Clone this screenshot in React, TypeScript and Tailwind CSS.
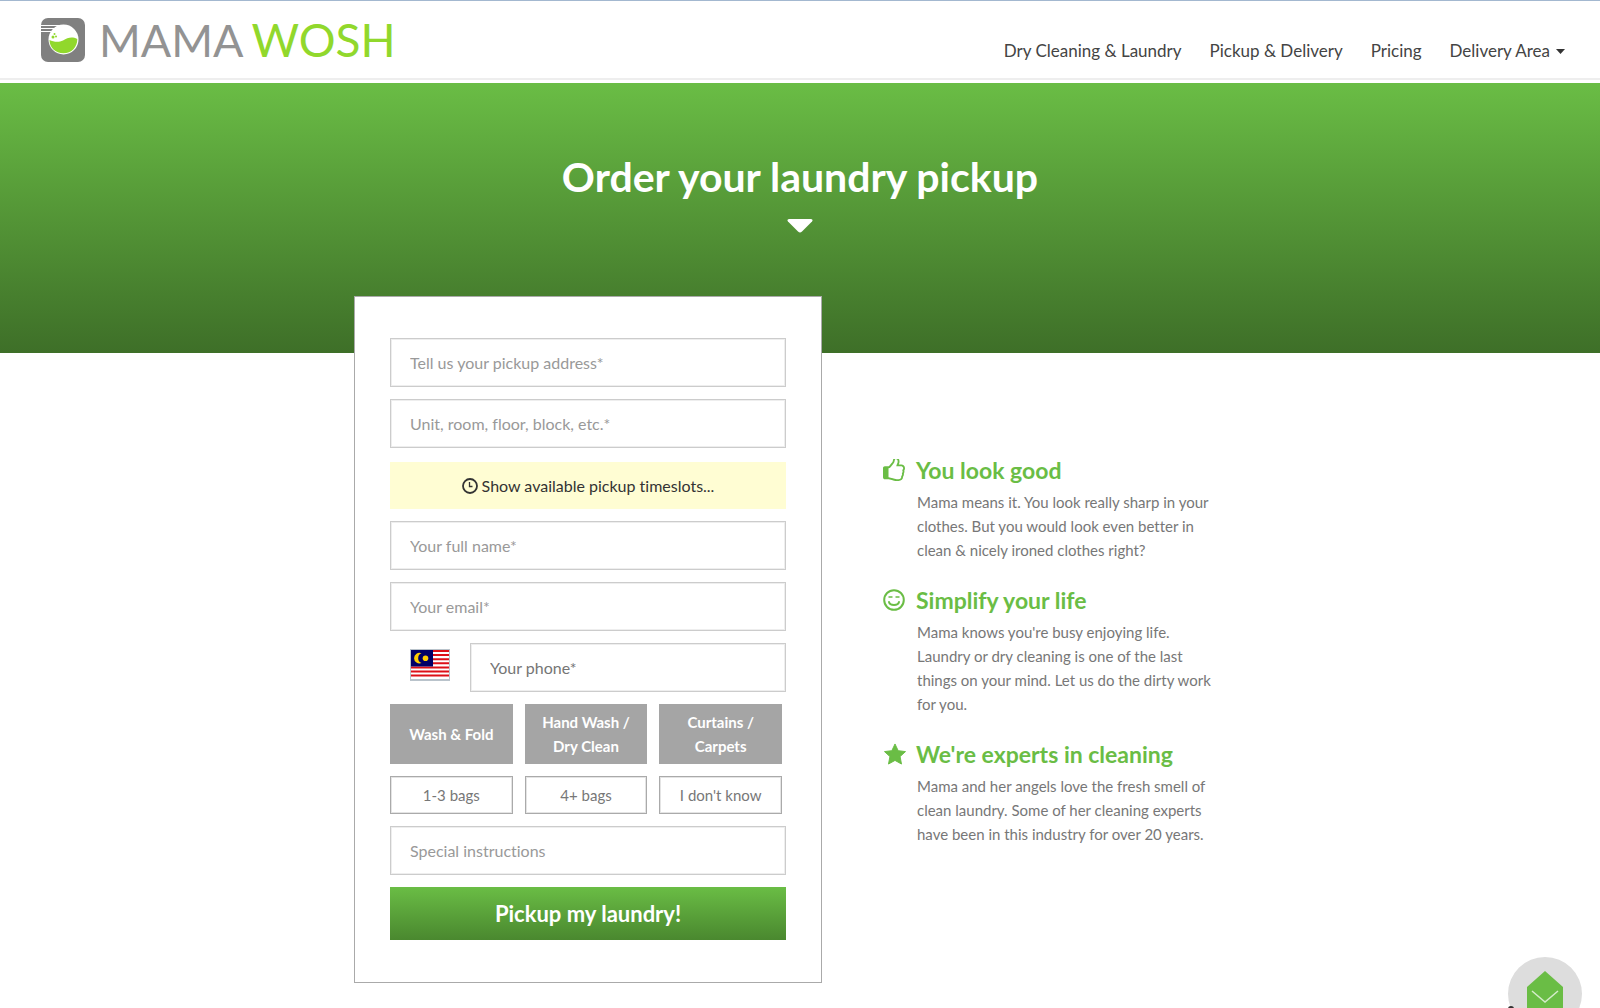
import type { ReactNode } from "react";

const fieldClass =
  "h-[49px] w-full min-w-0 border border-[#ccc] bg-white px-[19px] text-base shadow-[inset_0_0_0_1px_#eee] outline-none focus:border-[#6abd45]";

function Logo() {
  return (
    <a href="#home" aria-label="Mama Wosh" className="flex items-center gap-[14px]">
      <svg viewBox="0 0 44 44" className="size-11 shrink-0" aria-hidden="true">
        <rect x="0" y="0" width="44" height="44" rx="7" fill="#808080" />
        <path d="M0 7.500H20M0 10.500H14M0 13.500H10" stroke="#fff" strokeWidth="1.200" />
        <circle cx="22.500" cy="21.500" r="15" fill="#fff" />
        <path
          d="M8.500 22C12 23.500 17 25 22 22.500C27 19.500 31 18.500 36.300 21C36.500 29 30.500 35.300 22.500 35.300C14.500 35.300 8.500 29.500 8.500 22Z"
          fill="#91d82c"
        />
        <circle cx="12" cy="19" r="1.500" fill="#91d82c" />
        <circle cx="15" cy="18.500" r="1" fill="#91d82c" />
        <circle cx="13.500" cy="16" r="1" fill="#91d82c" />
      </svg>
      <span className="flex items-baseline gap-2 leading-[46px]">
        <span className="text-[45px] text-[#939393]">MAMA</span>
        <span className="text-[46px] text-[#91d82c]">WOSH</span>
      </span>
    </a>
  );
}

function Clock() {
  return (
    <svg viewBox="0 0 16 16" className="size-4 shrink-0" fill="none" stroke="currentColor" aria-hidden="true">
      <circle cx="8" cy="8" r="7" strokeWidth="1.800" />
      <path d="M7.500 4V8.500H10.500" strokeWidth="1.300" />
    </svg>
  );
}

function Flag() {
  return (
    <svg viewBox="0 0 40 32" className="h-8 w-10" aria-hidden="true">
      <rect width="40" height="32" fill="#b9c3cb" />
      <rect x="1" y="1" width="38" height="29" fill="#fff" />
      <path
        d="M1 2H39M1 6.100H39M1 10.200H39M1 14.300H39M1 18.400H39M1 22.500H39M1 26.600H39"
        stroke="#dd1018"
        strokeWidth="2"
      />
      <rect x="1" y="1" width="22" height="16.500" fill="#010066" />
      <path d="M11.500 4.300A5.300 5.300 0 1 0 11.500 14A5.200 5.200 0 0 1 11.500 4.300Z" fill="#fc0" />
      <circle cx="15.500" cy="9.200" r="2.800" fill="#fc0" />
    </svg>
  );
}

function ThumbsUp() {
  return (
    <svg viewBox="128 128 1536 1536" className="size-[22px]" fill="currentColor" aria-hidden="true">
      <path d="M192 768h256v640H192zM384 1344q0-26-19-45t-45-19-45 19-19 45 19 45 45 19 45-19 19-45z" fillRule="evenodd" />
      <path d="M1536 768q0-51-39-89.500t-89-38.500h-352q0-58 48-159.500t48-160.500q0-98-32-145t-128-47q-26 26-38 85t-30.500 125.500-59.500 109.500q-22 23-77 91-4 5-23 30t-31.500 41-34.500 42.500-40 44-38.500 35.500-40 27-35.500 9h-32v640h32q13 0 31.500 3t33 6.500 38 11 35 11.500 35.500 12.500 29 10.500q211 73 342 73h121q192 0 192-167 0-26-5-56 30-16 47.500-52.500t17.500-73.500-18-69q53-50 53-119 0-25-10-55.500t-25-47.500q32-1 53.500-47t21.500-81zm128-1q0 89-49 163 9 33 9 69 0 77-38 144 3 21 3 43 0 101-60 178 1 139-85 219.500t-227 80.500h-129q-96 0-189.500-22.500t-216.500-65.500q-116-40-138-40h-288q-53 0-90.500-37.500t-37.500-90.500v-640q0-53 37.500-90.500t90.500-37.500h274q36-24 137-155 58-75 107-128 24-25 35.500-85.500t30.500-126.500 62-108q39-37 90-37 84 0 151 32.500t102 101.500 35 186q0 93-48 192h176q104 0 180 76t76 179z" />
    </svg>
  );
}

function Smile() {
  return (
    <svg
      viewBox="0 0 22 22"
      className="size-[22px]"
      fill="none"
      stroke="currentColor"
      strokeWidth="2"
      aria-hidden="true"
    >
      <circle cx="11" cy="11" r="9.800" />
      <path d="M5.500 8H9.500M12.500 8H16.500" strokeWidth="1.600" />
      <path d="M6 13C7 17 15 17 16 13" strokeLinecap="round" />
    </svg>
  );
}

function Star() {
  return (
    <svg viewBox="0 0 24 23" className="h-[22px] w-6" fill="currentColor" aria-hidden="true">
      <path
        d="M12 1L15.300 8L23 9L17.300 14.200L18.800 22L12 18.200L5.200 22L6.700 14.200L1 9L8.700 8Z"
        stroke="currentColor"
        strokeLinejoin="round"
      />
    </svg>
  );
}

function Feature({ icon, title, children }: { icon: ReactNode; title: string; children: ReactNode }) {
  return (
    <section>
      <h2 className="flex items-center gap-[9px] text-[23px] leading-8 font-bold text-[#6abd45]">
        <span className="flex w-6 shrink-0">{icon}</span>
        {title}
      </h2>
      <p className="mt-1 pl-[34px] text-[15px] leading-6 text-[#777]">{children}</p>
    </section>
  );
}

function Field({ label, type = "text", dark = false }: { label: string; type?: string; dark?: boolean }) {
  return (
    <input
      type={type}
      aria-label={label}
      placeholder={label}
      className={`${fieldClass} ${dark ? "placeholder:text-[#757575]" : "placeholder:text-[#999]"}`}
    />
  );
}

const navItems = ["Dry Cleaning & Laundry", "Pickup & Delivery", "Pricing"];
const services = ["Wash & Fold", "Hand Wash\u00a0/ Dry Clean", "Curtains\u00a0/ Carpets"];
const amounts = ["1-3 bags", "4+ bags", "I don't know"];

export default function App() {
  return (
    <div className="min-h-screen bg-white font-['Lato',sans-serif] [font-variant-ligatures:none]">
      <header className="flex h-[83px] items-start justify-between border-t border-t-[#a3b8d0] pr-[35px] pl-[41px] shadow-[inset_0_-3px_0_#fff,inset_0_-5px_0_#eee]">
        <div className="pt-4">
          <Logo />
        </div>
        <nav className="flex gap-7 pt-[38px] text-[17px] leading-6 text-[#444]">
          {navItems.map((item) => (
            <a key={item} href="#services">
              {item}
            </a>
          ))}
          <button type="button" className="flex items-center gap-[6px]">
            Delivery Area
            <svg viewBox="0 0 9 5" className="h-[5px] w-[9px]" fill="#333" aria-hidden="true">
              <path d="M0 0H9L4.500 5Z" />
            </svg>
          </button>
        </nav>
      </header>

      <div className="flex h-[270px] flex-col items-center bg-linear-to-b from-[#6abd45] to-[#3e6f28] pt-[67px] text-white">
        <h1 className="text-[41px] leading-[54px] font-bold">Order your laundry pickup</h1>
        <svg viewBox="0 0 26 14" className="mt-[15px] h-[14px] w-[26px]" fill="currentColor" aria-hidden="true">
          <path d="M2 0H24Q26.500 .5 25 2.500L15 12.500Q13 14.500 11 12.500L1 2.500Q-.5 .5 2 0Z" />
        </svg>
      </div>

      <main className="mx-auto -mt-[57px] flex max-w-[892px] items-start justify-between">
        <form
          onSubmit={(event) => event.preventDefault()}
          className="flex w-[468px] flex-col gap-3 border border-[#aaa] bg-white px-[35px] pt-[41px] pb-[42px]"
        >
          <Field label="Tell us your pickup address*" />
          <Field label="Unit, room, floor, block, etc.*" />
          <button
            type="button"
            className="mt-[2px] flex h-[47px] items-center justify-center gap-1 bg-[#fffdd3] text-base text-[#333]"
          >
            <Clock />
            Show available pickup timeslots...
          </button>
          <Field label="Your full name*" />
          <Field label="Your email*" type="email" />
          <div className="flex items-start pl-5">
            <button type="button" aria-label="Country: Malaysia" className="mt-[6px] mr-5 shrink-0">
              <Flag />
            </button>
            <Field label="Your phone*" type="tel" dark />
          </div>
          <div className="grid grid-cols-3 gap-3 pr-1">
            {services.map((service) => (
              <button
                key={service}
                type="button"
                className="h-[60px] bg-[#a5a5a5] px-4 text-[15px] leading-6 font-bold text-white"
              >
                {service}
              </button>
            ))}
            {amounts.map((amount) => (
              <button
                key={amount}
                type="button"
                className="h-[38px] border border-[#aaa] text-[15px] text-[#777] shadow-[inset_0_0_0_1px_#e4e4e4]"
              >
                {amount}
              </button>
            ))}
          </div>
          <Field label="Special instructions" />
          <button
            type="submit"
            className="h-[53px] bg-linear-to-b from-[#6abd45] to-[#4a882f] text-[22px] font-bold text-white"
          >
            Pickup my laundry!
          </button>
        </form>

        <div className="flex w-[363px] flex-col gap-[22px] pt-[158px] pr-6">
          <Feature icon={<ThumbsUp />} title="You look good">
            Mama means it. You look really sharp in your clothes. But you would look even better in clean &amp; nicely
            ironed clothes right?
          </Feature>
          <Feature icon={<Smile />} title="Simplify your life">
            Mama knows you're busy enjoying life. Laundry or dry cleaning is one of the last things on your mind. Let us
            do the dirty work for you.
          </Feature>
          <Feature icon={<Star />} title="We're experts in cleaning">
            Mama and her angels love the fresh smell of clean laundry. Some of her cleaning experts have been in this
            industry for over 20 years.
          </Feature>
        </div>
      </main>

      <button
        type="button"
        aria-label="Send us a message"
        className="fixed right-[18px] -bottom-[23px] size-[74px] rounded-full bg-[#ddd]"
      >
        <svg viewBox="0 0 74 74" aria-hidden="true">
          <path d="M19 30L37 14L55 30V62H19Z" fill="#6abd45" />
          <path d="M24 34L37 45L50 34" fill="none" stroke="#d5ecca" strokeWidth="1.500" />
          <circle cx="3" cy="52" r="3" fill="#333" />
        </svg>
      </button>
    </div>
  );
}
